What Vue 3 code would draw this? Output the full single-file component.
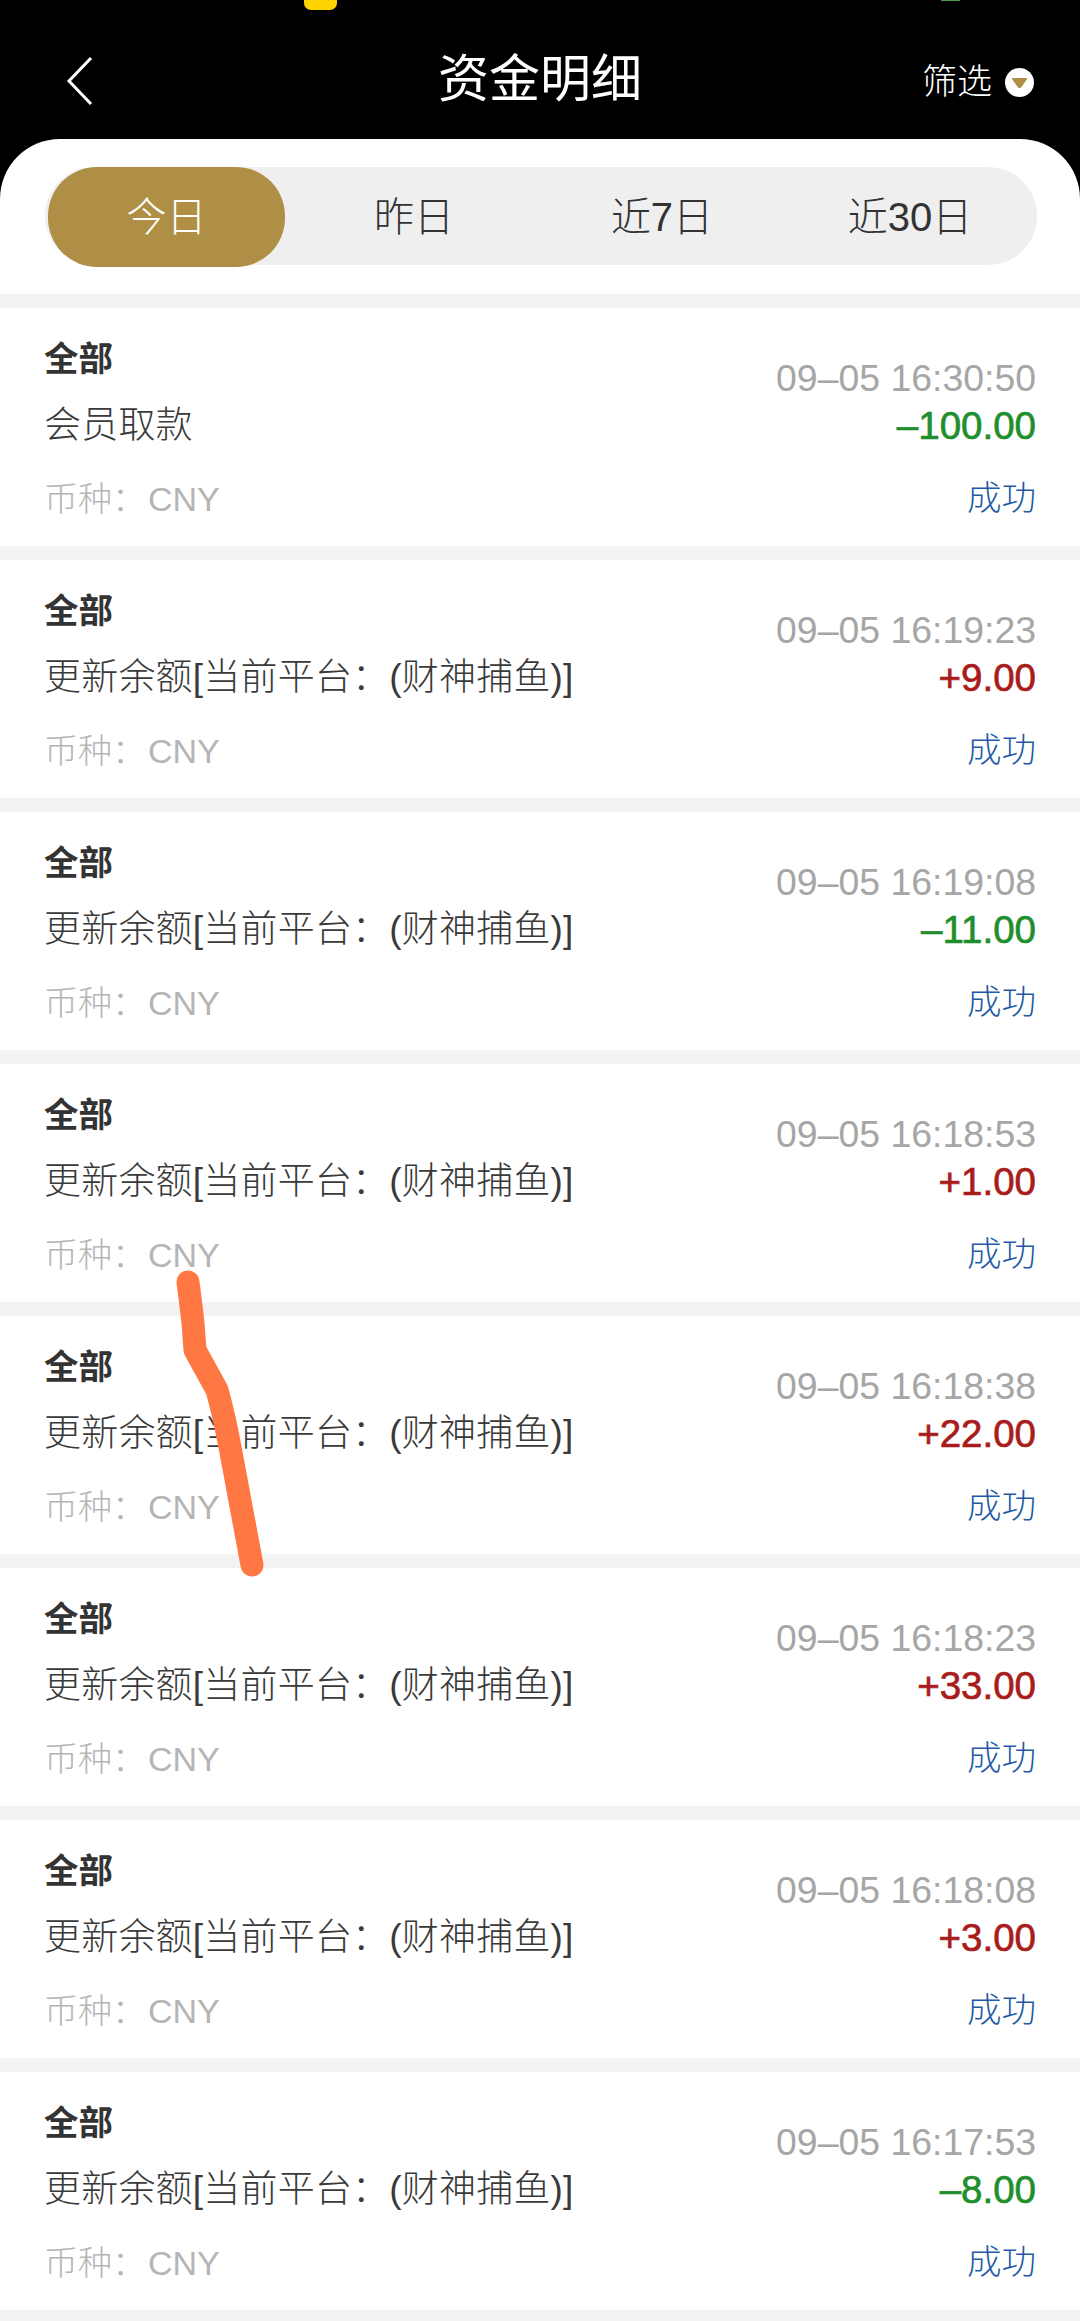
<template>
  <div class="page">
    <i class="notch"></i>
    <i class="signal"></i>

    <header class="topbar">
      <svg class="back" width="30" height="50" viewBox="0 0 30 50">
        <path d="M26 2 L4 25 L26 48" fill="none" stroke="#fff" stroke-width="3" />
      </svg>
      <h1>资金明细</h1>
      <div class="filter">
        <span>筛选</span>
        <svg width="29" height="29" viewBox="0 0 29 29">
          <circle cx="14.5" cy="14.5" r="14.5" fill="#fff" />
          <path d="M8 10 H21 Q22.5 10 21.8 11.5 L16 19.5 Q14.5 21 13 19.5 L7.2 11.5 Q6.5 10 8 10 Z" fill="#ae8f45" />
        </svg>
      </div>
    </header>

    <section class="panel">
      <div class="tabs">
        <div v-for="(tab, i) in tabs" :key="tab" class="tab" :class="{ active: i === 0 }">{{ tab }}</div>
      </div>
    </section>

    <main class="list">
      <div v-for="row in rows" :key="row.time" class="row">
        <div class="left">
          <div class="type">全部</div>
          <div class="desc">{{ row.desc }}</div>
          <div class="currency">币种：<span class="code">CNY</span></div>
        </div>
        <div class="right">
          <div class="time">09–05 {{ row.time }}</div>
          <div class="amount" :class="row.amount[0] === '+' ? 'up' : 'down'">{{ row.amount }}</div>
          <div class="status">成功</div>
        </div>
      </div>
    </main>

    <svg class="scribble" width="1080" height="2321" viewBox="0 0 1080 2321">
      <path d="M188 1282 Q191 1305 193 1323 L195 1350 L217 1390 Q224 1415 230 1447 L252 1565" fill="none" stroke="#ff7843" stroke-width="23" stroke-linecap="round" stroke-linejoin="round" />
    </svg>
  </div>
</template>

<script setup>
const tabs = ['今日', '昨日', '近7日', '近30日']

const update = '更新余额[当前平台：(财神捕鱼)]'

const rows = [
  { desc: '会员取款', time: '16:30:50', amount: '–100.00' },
  { desc: update, time: '16:19:23', amount: '+9.00' },
  { desc: update, time: '16:19:08', amount: '–11.00' },
  { desc: update, time: '16:18:53', amount: '+1.00' },
  { desc: update, time: '16:18:38', amount: '+22.00' },
  { desc: update, time: '16:18:23', amount: '+33.00' },
  { desc: update, time: '16:18:08', amount: '+3.00' },
  { desc: update, time: '16:17:53', amount: '–8.00' }
]
</script>

<style scoped>
.page {
  position: relative;
  width: 1080px;
  height: 2321px;
  overflow: hidden;
  background: #000;
  font-family: "Liberation Sans", "Noto Sans CJK SC", sans-serif;
}
.notch {
  position: absolute;
  left: 304px;
  top: -10px;
  width: 33px;
  height: 20px;
  border-radius: 7px;
  background: #ffd400;
}
.signal {
  position: absolute;
  left: 941px;
  top: 0;
  width: 19px;
  height: 1px;
  background: #4c9a4c;
}
.topbar {
  position: relative;
  height: 139px;
  display: flex;
  align-items: center;
  justify-content: center;
  padding-top: 21px;
  box-sizing: border-box;
  color: #fff;
}
.back {
  position: absolute;
  left: 65px;
  top: 56px;
}
h1 {
  margin: 0;
  font-size: 51px;
  font-weight: 400;
  line-height: 60px;
}
.filter {
  position: absolute;
  right: 46px;
  top: 60px;
  display: flex;
  align-items: center;
  gap: 13px;
  font-size: 35px;
  font-weight: 300;
  line-height: 44px;
}
.panel {
  background: #fff;
  border-radius: 60px 60px 0 0;
  padding: 28px 43px 29px 45px;
}
.tabs {
  display: grid;
  grid-template-columns: repeat(4, 1fr);
  height: 98px;
  border-radius: 49px;
  background: #efefef;
}
.tab {
  padding-right: 6px;
  text-align: center;
  font-size: 40px;
  font-weight: 300;
  line-height: 100px;
  color: #333;
}
.tab.active {
  margin: 0 8px 0 3px;
  padding: 0;
  border-radius: 49px;
  background: #ae8f45;
  color: #fff;
}
.list {
  background: #f3f3f3;
  padding: 14px 0 11px;
  display: flex;
  flex-direction: column;
  gap: 14px;
}
.row {
  height: 238px;
  box-sizing: border-box;
  padding: 18px 44px 0;
  display: flex;
  justify-content: space-between;
  background: #fff;
}
.type {
  font-size: 34.5px;
  font-weight: 700;
  line-height: 66px;
  color: #333;
}
.desc {
  margin-top: 1px;
  font-size: 37px;
  font-weight: 300;
  letter-spacing: 0.2px;
  line-height: 66px;
  color: #3a3a3a;
}
.currency {
  margin-top: 6px;
  font-size: 34px;
  font-weight: 300;
  line-height: 68px;
  color: #b5b5b5;
}
.code {
  margin-left: 2px;
}
.right {
  padding-top: 28px;
  text-align: right;
}
.time {
  font-size: 37.4px;
  line-height: 48px;
  color: #a6a6a6;
}
.amount {
  font-size: 38.5px;
  line-height: 48px;
  -webkit-text-stroke: 0.7px currentColor;
}
.amount.up {
  color: #a81c1c;
}
.amount.down {
  color: #1f8f2e;
}
.status {
  margin-top: 24px;
  font-size: 34.5px;
  font-weight: 300;
  line-height: 48px;
  color: #1f5aa5;
}
.scribble {
  position: absolute;
  left: 0;
  top: 0;
  pointer-events: none;
}
</style>
